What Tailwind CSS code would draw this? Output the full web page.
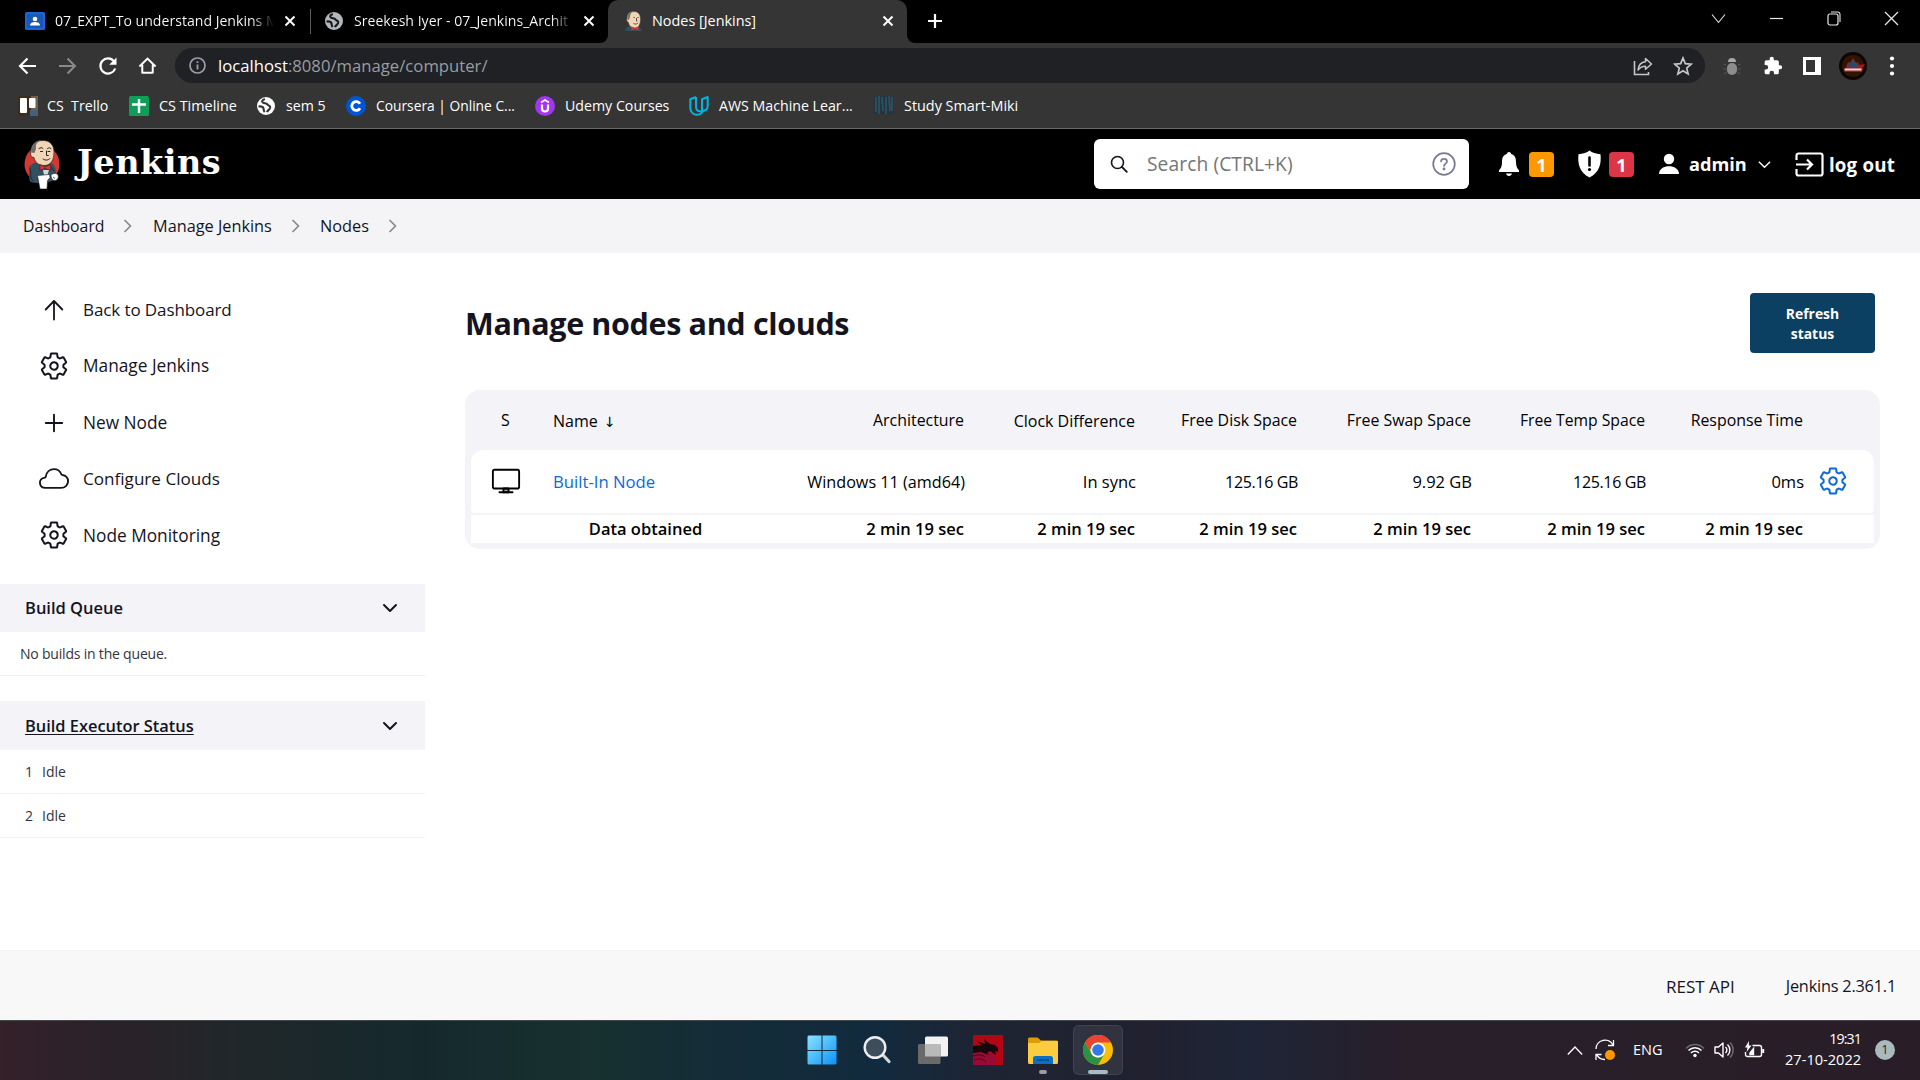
<!DOCTYPE html>
<html lang="en">
<head>
<meta charset="utf-8">
<title>Nodes [Jenkins]</title>
<script src="https://cdn.jsdelivr.net/npm/@tailwindcss/browser@4"></script>
</head>
<body class="w-[1920px] h-[1080px] overflow-hidden bg-white font-['Open_Sans',sans-serif] text-[#14141f] whitespace-nowrap flex flex-col">

<svg class="hidden">
  <defs>
    <symbol id="gear" viewBox="0 0 512 512"><path d="M262.29 192.31a64 64 0 1057.4 57.4 64.13 64.13 0 00-57.4-57.4zM416.39 256a154.34 154.34 0 01-1.53 20.79l45.21 35.46a10.81 10.81 0 012.45 13.75l-42.77 74a10.81 10.81 0 01-13.14 4.59l-44.9-18.08a16.11 16.11 0 00-15.17 1.75A164.48 164.48 0 01325 400.8a15.94 15.94 0 00-8.82 12.14l-6.73 47.89a11.08 11.08 0 01-10.68 9.17h-85.54a11.11 11.11 0 01-10.69-8.87l-6.72-47.82a16.07 16.07 0 00-9-12.22 155.3 155.3 0 01-21.46-12.57 16 16 0 00-15.11-1.71l-44.89 18.07a10.81 10.81 0 01-13.14-4.58l-42.77-74a10.8 10.8 0 012.45-13.75l38.21-30a16.05 16.05 0 006-14.08c-.36-4.17-.58-8.33-.58-12.5s.21-8.27.58-12.35a16 16 0 00-6.07-13.94l-38.19-30A10.81 10.81 0 0149.48 186l42.77-74a10.81 10.81 0 0113.14-4.59l44.9 18.08a16.11 16.11 0 0015.17-1.75A164.48 164.48 0 01187 111.2a15.94 15.94 0 008.82-12.14l6.73-47.89A11.08 11.08 0 01213.23 42h85.54a11.11 11.11 0 0110.69 8.87l6.72 47.82a16.07 16.07 0 009 12.22 155.3 155.3 0 0121.46 12.57 16 16 0 0015.11 1.71l44.89-18.07a10.81 10.81 0 0113.14 4.58l42.77 74a10.8 10.8 0 01-2.45 13.75l-38.21 30a16.05 16.05 0 00-6.05 14.08c.33 4.14.55 8.3.55 12.47z" fill="none" stroke="currentColor" stroke-width="34" stroke-linecap="round" stroke-linejoin="round"/></symbol>
    <symbol id="globe" viewBox="0 0 20 20"><circle cx="10" cy="10" r="9" fill="currentColor"/><path d="M9 3.200C6.500 3.400 5.200 5.400 7 6.600c1.800 1 3.800.4 4.800 2.200.8 1.500 2.900.6 2.400 3-.5 2-2.400 2.100-3.200 4.400M2.500 10.500c2.500-.3 4.500.2 5 2 .3 1.200.1 2.500 1.200 3.600" fill="none" stroke="var(--land)" stroke-width="2.100"/></symbol>
    <symbol id="close" viewBox="0 0 12 12"><path d="M1.500 1.500l9 9M10.500 1.500l-9 9" stroke="currentColor" stroke-width="2" fill="none"/></symbol>
    <symbol id="chev" viewBox="0 0 16 16"><path d="M2 5l6 6 6-6" stroke="currentColor" stroke-width="2" fill="none" stroke-linecap="round" stroke-linejoin="round"/></symbol>
    <symbol id="crumb" viewBox="0 0 10 14"><path d="M2 1.500L7.500 7 2 12.500" stroke="#86868f" stroke-width="1.700" fill="none" stroke-linecap="round" stroke-linejoin="round"/></symbol>
    <symbol id="head" viewBox="0 0 18 21"><path d="M1 20c.5-4 3-4.500 6-5h5c3 .5 5 1.500 5.500 5z" fill="#335061"/><path d="M3 7C3 2.500 6 .6 10 .6s6.500 2.600 6.500 7.400-1.500 9-5.500 9-6-2-6.500-5.500C2.800 11 2.500 8.500 3 7z" fill="#f0d6b7" stroke="#4b3f3a" stroke-width=".6"/><path d="M3.500 8.500C2.600 4 5 .9 9 .7 6.500 2 6 4 5.800 6.800L4.800 9z" fill="#7b716c"/><path d="M9.500 6.500h1.300M13.300 6.500h1.300M12.500 7v3h1M9.500 12.500c1.500.8 3 .7 4.300-.2" stroke="#3a2f2a" stroke-width=".8" fill="none"/><path d="M7.500 15.500v4l3.500-1.500 3.500 1.500v-4L11 17z" fill="#d33833"/></symbol>
  </defs>
</svg>

<!-- tab strip -->
<div class="h-[43px] bg-black text-white flex items-start text-[14.1px]">
  <div class="w-[310px] h-[42px] flex items-center pl-[25px]">
    <svg class="w-5 h-5 shrink-0" viewBox="0 0 20 20"><rect y="1" width="20" height="18" rx="1.500" fill="#1a66d9"/><rect x="2" y="3" width="16" height="14" fill="#1b57b5"/><circle cx="10" cy="8" r="2.300" fill="#fff"/><path d="M5 14.500c0-4.600 10-4.600 10 0z" fill="#fff"/></svg>
    <span class="ml-[10px] w-[219px] overflow-hidden bg-linear-to-r from-white from-90% to-transparent bg-clip-text text-transparent">07_EXPT_To understand Jenkins M</span>
    <svg class="ml-[10px] w-3 h-3"><use href="#close"/></svg>
  </div>
  <div class="w-px h-[25px] mt-[9px] bg-[#5c5c5c] shrink-0"></div>
  <div class="w-[297px] h-[42px] flex items-center pl-[13px]">
    <svg class="w-5 h-5 shrink-0 text-[#b4b8bd] [--land:#17181a]"><use href="#globe"/></svg>
    <span class="ml-[10px] w-[219px] overflow-hidden text-[14.100px] bg-linear-to-r from-white from-90% to-transparent bg-clip-text text-transparent">Sreekesh Iyer - 07_Jenkins_Archit</span>
    <svg class="ml-[10px] w-3 h-3 shrink-0"><use href="#close"/></svg>
  </div>
  <div class="relative w-[299px] h-[43px] bg-[#353535] rounded-t-[10px] flex items-center pl-4 pb-px">
    <svg class="absolute -left-2 bottom-0 w-2 h-2" viewBox="0 0 8 8"><path d="M8 0v8H0a8 8 0 008-8z" fill="#353535"/></svg>
    <svg class="absolute -right-2 bottom-0 w-2 h-2" viewBox="0 0 8 8"><path d="M0 0v8h8a8 8 0 01-8-8z" fill="#353535"/></svg>
    <svg class="w-[18px] h-[21px]"><use href="#head"/></svg>
    <span class="ml-[10px] w-[225px] text-[14.4px]">Nodes [Jenkins]</span>
    <svg class="ml-[5px] w-3 h-3"><use href="#close"/></svg>
  </div>
  <svg class="ml-[20px] mt-[13px] w-4 h-4" viewBox="0 0 16 16"><path d="M8 1v14M1 8h14" stroke="#fff" stroke-width="2.200"/></svg>
  <div class="ml-auto flex h-9 items-center gap-[43px] pr-[21px] text-[#e8e8e8]">
    <svg class="w-[15px] h-[15px]" viewBox="0 0 15 15"><path d="M1 3.500l6.500 8 6.500-8" stroke="currentColor" stroke-width="1.100" fill="none"/></svg>
    <svg class="w-[15px] h-[15px]" viewBox="0 0 15 15"><path d="M1 7.500h13" stroke="currentColor" stroke-width="1.200"/></svg>
    <svg class="w-[14px] h-[15px]" viewBox="0 0 14 15"><rect x="1" y="3" width="10" height="11" rx="2" stroke="currentColor" stroke-width="1.200" fill="none"/><path d="M4 1h6.500A2.500 2.500 0 0113 3.500V11" stroke="currentColor" stroke-width="1.100" fill="none"/></svg>
    <svg class="w-[15px] h-[15px]" viewBox="0 0 15 15"><path d="M1 1l13 13M14 1L1 14" stroke="currentColor" stroke-width="1.300"/></svg>
  </div>
</div>

<!-- address bar -->
<div class="h-[45px] bg-[#353535] flex items-center text-white">
  <svg class="ml-[18px] w-5 h-5" viewBox="0 0 20 20"><path d="M18 10H2.500M9.500 2.500L2 10l7.500 7.500" stroke="#fff" stroke-width="2.200" fill="none"/></svg>
  <svg class="ml-[19px] w-5 h-5" viewBox="0 0 20 20"><path d="M2 10h15.500M10.500 2.500L18 10l-7.500 7.500" stroke="#8a8a8a" stroke-width="2" fill="none"/></svg>
  <svg class="ml-[21px] w-5 h-5" viewBox="0 0 20 20"><path d="M16 5.200A7.600 7.600 0 1017.200 12.500" stroke="#fff" stroke-width="2.200" fill="none"/><path d="M18.500 1.500v7.300h-7.300z" fill="#fff"/></svg>
  <svg class="ml-[20px] w-[19px] h-5" viewBox="0 0 20 20"><path d="M4.500 18V8.800M15.500 18V8.800M4.500 17.200h11M1.500 10.500L10 2.200l8.500 8.300" stroke="#fff" stroke-width="2.100" fill="none"/></svg>
  <div class="ml-[18px] w-[1530px] h-[35px] rounded-full bg-[#202124] flex items-center pl-[14px] pr-[12px]">
    <svg class="w-[17px] h-[17px]" viewBox="0 0 17 17"><circle cx="8.500" cy="8.500" r="7.500" fill="none" stroke="#9aa0a6" stroke-width="1.700"/><path d="M8.500 7.500v5M8.500 4.300v1.800" stroke="#9aa0a6" stroke-width="1.800"/></svg>
    <span class="ml-[12px] text-[16.7px] text-[#9a9da1]"><span class="text-white">localhost</span>:8080/manage/computer/</span>
    <svg class="ml-auto w-5 h-5" viewBox="0 0 20 20"><path d="M1.500 5v13.500h14V16" stroke="#c4c7ca" stroke-width="1.600" fill="none"/><path d="M5 14c.5-5 3-7.800 7.500-8.200V2.500L18.500 8l-6 5.300v-3C9 10.300 7 11.500 5 14z" fill="none" stroke="#c4c7ca" stroke-width="1.500" stroke-linejoin="round"/></svg>
    <svg class="ml-[20px] w-5 h-5" viewBox="0 0 20 20"><path d="M10 2l2.300 5.600 6 .5-4.600 3.900 1.400 5.900L10 14.700l-5.100 3.200L6.300 12 1.700 8.100l6-.5z" stroke="#c4c7ca" stroke-width="1.700" fill="none"/></svg>
  </div>
  <svg class="ml-[17px] w-5 h-5" viewBox="0 0 20 20"><path d="M6 6a4 4 0 018 0z" fill="#a9a9a9"/><rect x="5" y="7" width="10" height="12" rx="5" fill="#8d8d8d"/><path d="M4 9L1.500 8M4 13H1.500M4.500 16L2 18M16 9l2.500-1M16 13h2.500M15.500 16l2.500 2" stroke="#5d5d5d" stroke-width="1"/></svg>
  <svg class="ml-[21px] w-5 h-5" viewBox="0 0 24 24"><path d="M20.500 11H19V7a2 2 0 00-2-2h-4V3.500a2.500 2.500 0 00-5 0V5H4a2 2 0 00-2 2v3.800h1.500a2.700 2.700 0 010 5.400H2V20a2 2 0 002 2h3.800v-1.500a2.700 2.700 0 015.400 0V22H17a2 2 0 002-2v-4h1.500a2.500 2.500 0 000-5z" fill="#fff"/></svg>
  <svg class="ml-[20px] w-[18px] h-[18px]" viewBox="0 0 18 18"><path fill-rule="evenodd" d="M0 0h18v18H0zM3 3v12h9V3z" fill="#fff"/></svg>
  <svg class="ml-[18px] w-7 h-7" viewBox="0 0 28 28"><circle cx="14" cy="14" r="14" fill="#0c0705"/><circle cx="14" cy="14" r="11" fill="#301503"/><path d="M7 15l2-5 2 1 3-5 3 5 2-1 1 3 6-1-2 3-1 5H5z" fill="#a4191b"/><path d="M9 13l5-5 5 5-1 2h-8z" fill="#274b68"/><path d="M5.500 17.500h17" stroke="#e3dcdc" stroke-width="2"/></svg>
  <svg class="ml-[15px] w-5 h-5" viewBox="0 0 20 20" fill="#fff"><circle cx="10" cy="2.500" r="2.100"/><circle cx="10" cy="10" r="2.100"/><circle cx="10" cy="17.500" r="2.100"/></svg>
</div>

<!-- bookmarks -->
<div class="h-[41px] bg-[#353535] border-b border-[#6b6b6b] flex items-center text-white text-[14.2px] pl-[18px] pb-[4px]">
  <div class="w-[111px] flex items-center gap-[9px]">
    <svg class="w-5 h-5" viewBox="0 0 20 20"><rect width="20" height="20" fill="#3b2d1f"/><path d="M13 0h7v20h-7z" fill="#71604d"/><path d="M12 14h8v6h-8z" fill="#46627a"/><rect x="2" y="2" width="7" height="15" rx="1" fill="#fff"/><rect x="11" y="2" width="6.500" height="10" rx="1" fill="#fff"/></svg>
    <span class="whitespace-pre">CS  Trello</span></div>
  <div class="w-[127px] flex items-center gap-[10px]">
    <svg class="w-5 h-5" viewBox="0 0 20 20"><rect width="20" height="20" rx="1.500" fill="#0f9d58"/><path d="M10 3v14M3 8.500h14" stroke="#fff" stroke-width="2.400"/></svg>
    <span class="text-[14.400px]">CS Timeline</span></div>
  <div class="w-[90px] flex items-center gap-[10px]">
    <svg class="w-5 h-5 text-white [--land:#353535]"><use href="#globe"/></svg>
    <span>sem 5</span></div>
  <div class="w-[189px] flex items-center gap-[10px]">
    <svg class="w-5 h-5" viewBox="0 0 20 20"><circle cx="10" cy="10" r="10" fill="#0056d2"/><path d="M14 7.800A4.400 4.400 0 1014 12.200" fill="none" stroke="#fff" stroke-width="2.800"/></svg>
    <span class="text-[13.8px]">Coursera | Online C...</span></div>
  <div class="w-[154px] flex items-center gap-[10px]">
    <svg class="w-5 h-5" viewBox="0 0 20 20"><circle cx="10" cy="10" r="10" fill="#a435f0"/><path d="M6 6.500L10 4l4 2.500" fill="none" stroke="#fff" stroke-width="1.700"/><path d="M7 8.500v4a3 3 0 006 0v-4" fill="none" stroke="#fff" stroke-width="2.200"/></svg>
    <span>Udemy Courses</span></div>
  <div class="w-[185px] flex items-center gap-[10px]">
    <svg class="w-5 h-5" viewBox="0 0 20 20" fill="none" stroke="#02b3e4" stroke-width="2" stroke-linejoin="round"><path d="M7 1L1.300 3.200V12c0 4 3 6.800 6.500 6.800 2.700 0 4.700-1.300 5.700-3.500"/><path d="M7 1v9.500c0 3 1 4.800 4 4.800 5 0 7.700-1.600 7.700-5.300V1L13 3.200v11"/></svg>
    <span class="text-[14.2px]">AWS Machine Lear...</span></div>
  <div class="flex items-center gap-[10px]">
    <svg class="w-5 h-5" viewBox="0 0 20 20"><rect width="20" height="18" fill="#26343d"/><path d="M2 1v15M5 0v18M8 1l1 14M12 1v17M15 0l1 15M18 1v14" stroke="#2c5568" stroke-width="1.600"/></svg>
    <span class="text-[14.400px]">Study Smart-Miki</span></div>
</div>

<!-- Jenkins header -->
<header class="h-[70px] bg-black flex items-center text-white">
  <svg class="ml-[23px] w-[38px] h-[51px]" viewBox="0 0 38 51">
    <ellipse cx="19" cy="25" rx="17.500" ry="18.500" fill="#d33833"/>
    <path d="M6 28c2-3 6-4.500 10-5h10c4 1 6 4 7 9v8c-6 4-18 5-25 3C5 42 7 36 6 28z" fill="#335061"/>
    <path d="M7 29c1 6 0 10 3 13M27 27l4 5" stroke="#1a2a35" stroke-width="1" fill="none"/>
    <path d="M8 13C8 5 13 1.500 20 1.500S31 6 31 13c0 8-3 13.500-10 13.500-5 0-9-3-10-8-3 0-4-3-3-5.500z" fill="#f0d6b7" stroke="#2c2320" stroke-width=".7"/>
    <path d="M8.500 13.500C7.500 7 12 1.600 18 1.300c-4 2-5.500 4-5 7.500.2 2-1 3-1.500 5.200z" fill="#6d6b6d"/>
    <path d="M16 9.500c1.500-1.200 3-1 4 0M24.500 9.500c1.300-1 2.500-.8 3.500.2M17.500 12.500h2M25 12.500h2M23.500 12v4.500h1.800M20 20c2.500 1.800 5.500 1.300 7-.6" stroke="#2c2320" stroke-width="1" fill="none" stroke-linecap="round"/>
    <path d="M17 25.500v6l5-2.300 5.500 2.300v-6L22 28z" fill="#d33833" stroke="#5a1512" stroke-width=".6"/>
    <path d="M20 31h6l-1.500 5H21z" fill="#cdd9de"/>
    <path d="M14.500 36.500l12-1 .5 3-2.500 3-.5 8.500h-7z" fill="#fff" stroke="#222" stroke-width=".6"/>
    <path d="M28 36c2-2 6-2 7 0 1 3-1 6-4 5.500-2-.5-3-3-3-5.500z" fill="#fff" stroke="#222" stroke-width=".6"/><path d="M30 38l2 1.500" stroke="#222" stroke-width=".7"/>
  </svg>
  <span class="ml-[16px] -mt-[3px] text-[33.5px] tracking-[0.500px] leading-none font-bold font-['DejaVu_Serif',serif]">Jenkins</span>
  <div class="ml-auto w-[375px] h-[50px] rounded-md bg-white flex items-center pl-[16px] pr-[13px]">
    <svg class="w-[18px] h-[18px]" viewBox="0 0 18 18"><circle cx="7.500" cy="7.500" r="6" fill="none" stroke="#14141f" stroke-width="1.600"/><path d="M12 12l4.800 4.800" stroke="#14141f" stroke-width="1.800" stroke-linecap="round"/></svg>
    <span class="ml-[19px] pt-px text-[19.200px] text-[#767676] tracking-[0.1px]">Search (CTRL+K)</span>
    <svg class="ml-auto w-6 h-6" viewBox="0 0 24 24" fill="none" stroke="#7a7a95" stroke-width="1.700" stroke-linecap="round"><circle cx="12" cy="12" r="10.800"/><path d="M9 9.300c.3-3.300 6-3.300 6 .1 0 2.200-3 2.300-3 4.600"/><circle cx="12" cy="17" r=".6" fill="#7a7a95"/></svg>
  </div>
  <svg class="ml-[29px] w-[22px] h-[26px]" viewBox="0 0 22 26" fill="#fff"><path d="M11 1c1.500 0 2 1 2.200 2C17 4.200 18 7 18 11c0 4 1 6.500 3 8.300V21H1v-1.700C3 17.500 4 15 4 11c0-4 1-6.800 4.800-8C9 2 9.500 1 11 1zM8 22.500h6c-.5 3.300-5.500 3.300-6 0z"/></svg>
  <span class="ml-[9px] w-[25px] h-[25px] rounded bg-[#ff9800] grid place-items-center text-[18px] font-bold">1</span>
  <svg class="ml-[23px] w-[25px] h-[28px]" viewBox="0 0 25 28"><path d="M12.500.5C15 2.500 19 4 23.500 4.300 24.500 14 22.500 22.500 12.500 27.500 2.500 22.500.5 14 1.500 4.300 6 4 10 2.500 12.500.5z" fill="#fff"/><path d="M12.500 7.500v8" stroke="#000" stroke-width="2.600" stroke-linecap="round"/><circle cx="12.500" cy="19.500" r="1.600"/></svg>
  <span class="ml-[7px] w-[25px] h-[25px] rounded bg-[#dc3545] grid place-items-center text-[18px] font-bold">1</span>
  <svg class="ml-[24px] w-[22px] h-[22px]" viewBox="0 0 22 22" fill="#fff"><circle cx="11" cy="6" r="5.200"/><path d="M1 21c0-10.500 20-10.500 20 0z"/></svg>
  <span class="ml-[9px] pt-[2px] text-[18.200px] font-bold w-[58px]">admin</span>
  <svg class="ml-[10px] w-[15px] h-[15px]" viewBox="0 0 16 16"><path d="M2 5l6 6 6-6" stroke="#fff" stroke-width="1.500" fill="none"/></svg>
  <svg class="ml-[23px] w-[29px] h-[25px]" viewBox="0 0 29 25" fill="none" stroke="#fff" stroke-width="2.200"><path d="M1.500 8V3.500a2 2 0 012-2h22a2 2 0 012 2v18a2 2 0 01-2 2h-22a2 2 0 01-2-2V17" /><path d="M1 12.500h15M12 7.500l5 5-5 5"/></svg>
  <span class="ml-[5px] mr-[25px] pt-[2px] text-[18.700px] tracking-[0.2px] font-bold">log out</span>
</header>

<nav class="h-[54px] bg-[#f4f4f7] flex items-center text-[16.300px] pl-[23px]">
  <span class="w-[81px] pt-px text-[15.800px]">Dashboard</span>
  <svg class="ml-[19px] w-[10px] h-[14px]"><use href="#crumb"/></svg>
  <span class="ml-[20px] w-[120px]">Manage Jenkins</span>
  <svg class="ml-[18px] w-[10px] h-[14px]"><use href="#crumb"/></svg>
  <span class="ml-[19px] w-[50px]">Nodes</span>
  <svg class="ml-[18px] w-[10px] h-[14px]"><use href="#crumb"/></svg>
</nav>

<div class="h-[697px] flex">
  <!-- side panel -->
  <aside class="w-[425px] pt-[29px] shrink-0">
    <div class="flex flex-col pl-[39px] text-[17.300px]">
      <a class="h-[56.250px] flex items-center gap-[14px]"><svg class="w-[30px] h-[30px]" viewBox="0 0 30 30" fill="none" stroke="currentColor" stroke-width="1.800" stroke-linecap="round" stroke-linejoin="round"><path d="M15 24.500V6M6.700 14.500L15 6l8.300 8.500"/></svg><span class="text-[17px] tracking-[-0.1px]">Back to Dashboard</span></a>
      <a class="h-[56.250px] flex items-center gap-[14px]"><svg class="w-[30px] h-[30px]"><use href="#gear"/></svg>Manage Jenkins</a>
      <a class="h-[56.250px] flex items-center gap-[14px]"><svg class="w-[30px] h-[30px]" viewBox="0 0 30 30" stroke="currentColor" stroke-width="1.900" stroke-linecap="round"><path d="M15 6.800v16.400M6.800 15h16.400"/></svg>New Node</a>
      <a class="h-[56.250px] flex items-center gap-[14px]"><svg class="w-[30px] h-[30px]" viewBox="0 0 512 512"><path d="M100.180 241.190a15.930 15.930 0 0013.370-13.250C126.600 145.590 186.340 96 256 96c64.690 0 107.790 42.360 124.920 87a16.110 16.110 0 0012.530 10.180C449.360 202.060 496 239.210 496 304c0 66-54 112-120 112H116c-55 0-100-27.440-100-88 0-54.430 43.890-80.400 84.180-86.810z" transform="translate(0 -8)" fill="none" stroke="currentColor" stroke-width="32" stroke-linejoin="round"/></svg><span class="text-[17.100px]">Configure Clouds</span></a>
      <a class="h-[56.250px] flex items-center gap-[14px]"><svg class="w-[30px] h-[30px]"><use href="#gear"/></svg><span class="pt-px">Node Monitoring</span></a>
    </div>
    <div class="mt-[20.750px] h-12 bg-[#f3f3f8] flex items-center justify-between pl-[25px] pr-[27px] text-[16.500px] font-semibold"><span class="pt-px">Build Queue</span><svg class="w-4 h-4"><use href="#chev"/></svg></div>
    <div class="h-[44px] border-b border-[#f0f0f3] flex items-center pl-5 text-[14px] tracking-[-0.200px] text-[#33333d]">No builds in the queue.</div>
    <div class="mt-[25px] h-[49px] bg-[#f3f3f8] flex items-center justify-between pl-[25px] pr-[27px] text-[16.400px] font-semibold"><span class="pt-px underline decoration-1 underline-offset-2">Build Executor Status</span><svg class="w-4 h-4"><use href="#chev"/></svg></div>
    <div class="h-[44px] border-b border-[#f0f0f3] flex items-center pl-[25px] text-[14px] text-[#33333d]"><span class="w-[17px]">1</span>Idle</div>
    <div class="h-[44px] border-b border-[#f0f0f3] flex items-center pl-[25px] text-[14px] text-[#33333d]"><span class="w-[17px]">2</span>Idle</div>
  </aside>

  <main class="flex-1 pl-10 pr-10 pt-10">
    <div class="flex items-start justify-between pr-[5px]">
      <h1 class="text-[30.500px] tracking-[-0.350px] font-bold leading-[60px]">Manage nodes and clouds</h1>
      <button class="w-[125px] h-[60px] pt-[2px] rounded bg-[#0b4063] text-white text-[13.900px] leading-5 font-bold">Refresh<br>status</button>
    </div>
    <div class="mt-[37px] h-[159px] w-[1415px] bg-[#f3f3f8] rounded-[15px] px-[6px] text-black">
      <div class="h-[60px] pt-px grid grid-cols-[82px_241px_170px_171px_162px_174px_174px_158px_71px] items-center text-right text-[15.900px]">
        <span class="text-left pl-[30px]">S</span><span class="text-left text-[16px]">Name <span class="ml-[2px] text-[14px] font-['DejaVu_Sans']">↓</span></span><span>Architecture</span><span class="text-[16px]">Clock Difference</span><span>Free Disk Space</span><span>Free Swap Space</span><span class="text-[15.700px]">Free Temp Space</span><span>Response Time</span>
      </div>
      <div class="h-[63px] bg-white rounded-t-[12px] rounded-b grid grid-cols-[82px_241px_171px_171px_162px_174px_174px_158px_70px] items-center text-right text-[16.500px]">
        <svg class="ml-[20px] w-[30px] h-[30px] -mt-[2px]" viewBox="0 0 512 512" fill="none" stroke="currentColor" stroke-width="32" stroke-linejoin="round"><rect x="32" y="64" width="448" height="320" rx="32"/><path d="M304 448l-8-64h-80l-8 64z" fill="currentColor" fill-opacity=".35"/><path d="M368 448H144" stroke-linecap="round"/></svg>
        <a class="text-left text-[16.700px] text-[#0b6ad8]">Built-In Node</a><span class="pt-px text-[16.200px]">Windows 11 (amd64)</span><span class="pt-px">In sync</span><span class="text-[16px] tracking-[-0.350px]">125.16 GB</span><span class="pt-px">9.92 GB</span><span class="text-[16px] tracking-[-0.350px]">125.16 GB</span><span class="pt-px">0ms</span>
        <svg class="ml-[14px] -mt-[2px] w-[30px] h-[30px] text-[#0b6ad8]"><use href="#gear"/></svg>
      </div>
      <div class="mt-[2px] h-[28px] pt-px bg-white grid grid-cols-[349px_144px_171px_162px_174px_174px_158px_71px] items-center text-right text-[16.500px] font-semibold">
        <span class="text-center">Data obtained</span><span>2 min 19 sec</span><span>2 min 19 sec</span><span>2 min 19 sec</span><span>2 min 19 sec</span><span>2 min 19 sec</span><span>2 min 19 sec</span>
      </div>
    </div>
  </main>
</div>

<footer class="h-[70px] bg-[#f8f8f8] border-t border-[#f3f3f3] flex items-center justify-end pr-6 pt-[2px] text-[17px]">
  <span class="mr-[51px]">REST API</span><span class="text-[16.300px] tracking-[-0.200px]">Jenkins 2.361.1</span>
</footer>

<!-- taskbar -->
<div class="h-[60px] pb-[2px] border-t border-[#43474a] bg-[linear-gradient(90deg,#34212a_0%,#2a2229_6%,#1f272a_13%,#15292d_22%,#17302f_30%,#132c38_38%,#122a3e_46%,#1e2433_51%,#212130_60%,#1e2536_65%,#281f2b_73%,#291e27_100%)] flex items-center text-white">
  <div class="w-[1123px] flex items-center justify-end shrink-0">
    <svg class="w-[30px] h-[30px]" viewBox="0 0 30 30"><defs><linearGradient id="w" x1="0" y1="0" x2="1" y2="1"><stop stop-color="#8be3fd"/><stop offset="1" stop-color="#0a93fa"/></linearGradient></defs><path d="M2 .5h12.500V15H.5V2A1.500 1.500 0 012 .5zM15.500.5H28A1.500 1.500 0 0129.500 2v13h-14zM.5 16h14v13.500H2A1.500 1.500 0 01.5 28zM15.500 16h14v12a1.500 1.500 0 01-1.500 1.500H15.500z" fill="url(#w)"/></svg>
    <svg class="ml-[26px] w-[30px] h-[30px]" viewBox="0 0 30 30"><path d="M19.500 19.500l6.500 7" stroke="#d5d8db" stroke-width="3.200" stroke-linecap="round"/><circle cx="12" cy="12.500" r="10.300" fill="#3d4d5b" stroke="#eceef0" stroke-width="2.400"/></svg>
    <svg class="ml-[25px] w-[30px] h-[30px]" viewBox="0 0 30 30"><rect x="7" y="1.500" width="23" height="20" rx="1.500" fill="#f2f2f2"/><rect y="9" width="22.500" height="20" rx="1.500" fill="#6a6a6a"/><path d="M7 9h15.500v12.500H7z" fill="#b9b9b9"/></svg>
    <svg class="ml-[25px] w-[30px] h-[30px]" viewBox="0 0 30 30"><rect width="30" height="30" fill="#b20614"/><path d="M0 16h14l8 4v10H0z" fill="#9a0a34"/><path d="M0 11l8-1-4-4 8 3-1-5 6 5 5 1 3 3v4l-3-1 1 4-6-4-3 2 2 2-8-3-8 1z" fill="#17080e"/><path d="M0 21c6-2 10-1 12 1M1 25c5-2 9-1 12 2" stroke="#3f0a1c" fill="none"/></svg>
    <svg class="ml-[25px] w-[30px] h-[44px] overflow-visible" viewBox="0 0 30 44"><path d="M0 11a1.500 1.500 0 011.500-1.500h8L13 12.500h15.500A1.500 1.500 0 0130 14v6H0z" fill="#dd9d06"/><path d="M0 15h11l2.500-2H29a1 1 0 011 1v20.500a1.500 1.500 0 01-1.500 1.500h-27A1.500 1.500 0 010 34.500z" fill="#fdcb3e"/><path d="M5 36v-5.500A2.500 2.500 0 017.500 28h15a2.500 2.500 0 012.500 2.500V36z" fill="#0b6fc4"/><path d="M9 32h12" stroke="#064a8a" stroke-width="1.500"/><rect x="11" y="42" width="8" height="4" rx="2" fill="#9c9ba0"/></svg>
    <div class="relative ml-[15px] w-[50px] h-[50px] rounded-md bg-white/8 border border-white/8 flex justify-center pt-[9px]">
      <svg class="w-[30px] h-[30px]" viewBox="0 0 48 48"><circle cx="24" cy="24" r="24" fill="#fbbc04"/><path d="M3.200 12A24 24 0 0144.800 12H24a12 12 0 00-10.400 18z" fill="#ea4335"/><path d="M3.200 12A24 24 0 0024 48l10.400-18a12 12 0 01-20.800 0z" fill="#2a9246"/><circle cx="24" cy="24" r="12" fill="#fff"/><circle cx="24" cy="24" r="9.300" fill="#3479ec"/></svg>
      <div class="absolute left-[14px] bottom-0 w-5 h-1 rounded-full bg-[#a9bcc2]"></div>
    </div>
  </div>
  <div class="ml-auto flex items-center text-[14.500px]">
    <svg class="w-4 h-4" viewBox="0 0 16 16"><path d="M.8 12.500L8 5l7.200 7.500" stroke="#fff" stroke-width="1.300" fill="none"/></svg>
    <svg class="ml-[12px] w-[20px] h-[22px]" viewBox="0 0 20 22"><path d="M1 10a9 9 0 0117-4M18.500 1v5.500H13M10 20.500A9 9 0 011.500 15M1 21v-5.500h5.500" stroke="#fff" stroke-width="1.300" fill="none"/><circle cx="15" cy="16" r="5" fill="#ff9800"/></svg>
    <span class="ml-[18px] w-[31px]">ENG</span>
    <svg class="ml-[21px] w-[20px] h-[16px]" viewBox="0 0 20 16" fill="none" stroke-width="1.500" stroke="#fff"><path d="M1 6.500a12 12 0 0118 0" stroke="#6f686f"/><path d="M3.500 8.500a9 9 0 0113 0M6 11a5.500 5.500 0 018 0"/><circle cx="10" cy="13.500" r="1.700" fill="#fff" stroke="none"/></svg>
    <svg class="ml-[9px] w-[21px] h-[18px]" viewBox="0 0 21 18" fill="none" stroke="#fff" stroke-width="1.400"><path d="M1 6v6h3.500L9 16V2L4.500 6zM11.500 6a4 4 0 010 6M13.500 3.500a7.500 7.500 0 010 11" stroke-linejoin="round"/><path d="M16 1.500a10.500 10.500 0 010 15" stroke="#6f686f"/></svg>
    <svg class="ml-[9px] w-[21px] h-[18px]" viewBox="0 0 21 18" fill="none" stroke="#fff" stroke-width="1.400"><path d="M8.500 4.500h7A2 2 0 0117.500 6.500v7a2 2 0 01-2 2h-12a2 2 0 01-2-2V11"/><path d="M19.200 8v4" stroke-width="2"/><path d="M6 13.500V12l3.500-4.500v6z" fill="#fff"/><path d="M5 0L1 6.500h2.500L2.500 11 7.500 4.500H4.800z" fill="#fff" stroke="none"/></svg>
    <div class="ml-[20px] -mt-px w-[76px] text-right leading-5"><div class="text-[14.200px] tracking-[-0.900px]">19:31</div><div class="text-[14.600px]">27-10-2022</div></div>
    <span class="ml-[14px] mr-[25px] w-5 h-5 rounded-full bg-[#a9b9bd] text-[#222] grid place-items-center text-[12px]">1</span>
  </div>
</div>
</body>
</html>
